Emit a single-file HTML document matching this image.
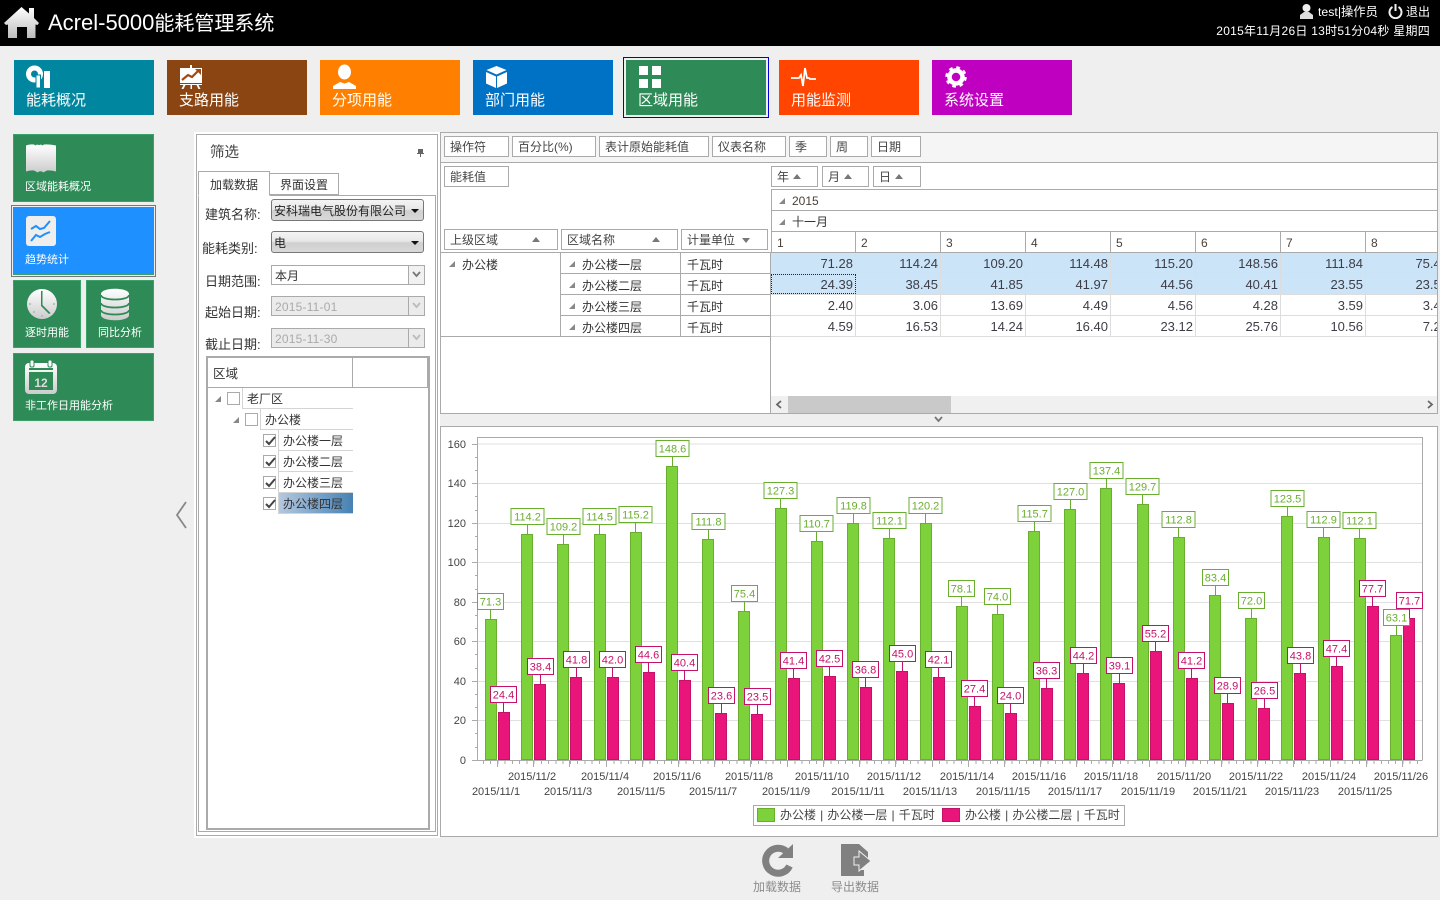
<!DOCTYPE html>
<html lang="zh"><head><meta charset="utf-8"><title>Acrel-5000能耗管理系统</title>
<style>
*{box-sizing:border-box}
html,body{margin:0;padding:0}
body{width:1440px;height:900px;overflow:hidden;background:#efefef;position:relative;font:12px "Liberation Sans","WenQuanYi Zen Hei","Noto Sans CJK SC",sans-serif;color:#444}
.a,.t,.s,.f,.l,.tri,.up,.dn{position:absolute}
.a{white-space:nowrap}
.t{top:60px;width:140px;height:55px;color:#fff;font-size:15px}
.t span{position:absolute;left:12px;top:32px;line-height:17px}
.t svg{position:absolute;left:0;top:0}
.s{background:#2e8b57;border:1px solid #3aa268;color:#fff;font-size:11px}
.s span{position:absolute;left:11px;line-height:14px;white-space:nowrap}
.s svg{position:absolute;left:0;top:0}
.l{font-size:13px;color:#333;white-space:nowrap;line-height:16px}
.f{background:#fff;border:1px solid #aaa;height:21px;line-height:21px;padding-left:5px;color:#444;white-space:nowrap}
.cb{position:absolute;left:271px;width:153px;height:22px;border:1px solid #777;border-radius:3px;background:linear-gradient(#f4f4f4,#e8e8e8 45%,#cfcfcf 55%,#d8d8d8);padding-left:2px;line-height:23px;color:#222;white-space:nowrap;overflow:hidden}
.cb i{position:absolute;right:4px;top:9px;border-left:4px solid transparent;border-right:4px solid transparent;border-top:4px solid #111}
.ip{position:absolute;left:271px;width:154px;height:20px;border:1px solid #aaa;background:#fff;line-height:20px;padding-left:3px;color:#333}
.ip.d{background:#ebebeb;color:#aaa;letter-spacing:.2px}
.ip b{position:absolute;right:0;top:0;width:16px;height:18px;border-left:1px solid #aaa;background:#f1f1f1}
.ip.d b{background:#ebebeb}
.ip svg{position:absolute;left:3px;top:5px}
.ck{position:absolute;width:13px;height:13px;border:1px solid #aaa;background:#fff}
.ck svg{position:absolute;left:1px;top:1px}
.tc{position:absolute;right:auto;height:21px;border-left:1px solid #d4d4d4;border-bottom:1px solid #d4d4d4;background:#fff;line-height:22px;padding-left:4px;color:#333;white-space:nowrap}
.tri{width:0;height:0;border-left:6px solid transparent;border-bottom:6px solid #888}
.up{width:0;height:0;border-left:4.5px solid transparent;border-right:4.5px solid transparent;border-bottom:5px solid #777}
.dn{width:0;height:0;border-left:4.5px solid transparent;border-right:4.5px solid transparent;border-top:5px solid #777}
.rw{display:flex;height:21px}
.rw div{width:85px;flex:none;border-right:1px solid #ddd;border-bottom:1px solid #ddd;text-align:right;padding-right:2px;font-size:13px;line-height:22px;color:#3d3d48}
.rw.b div{background:#cce4f7}
.dh{display:flex;height:21px}
.dh div{width:85px;flex:none;border-right:1px solid #aaa;border-bottom:1px solid #aaa;padding-left:5px;font-size:12px;line-height:22px;color:#4a4038}
.lc{position:absolute;height:21px;line-height:24px;color:#333;white-space:nowrap}
svg text{font-family:"Liberation Sans","WenQuanYi Zen Hei",sans-serif}
</style></head><body>
<!-- header -->
<div class="a" style="left:0;top:0;width:1440px;height:46px;background:#000"></div>
<svg class="a" style="left:0;top:0" width="46" height="46"><defs><linearGradient id="wg" x1="0" y1="0" x2="0" y2="1"><stop offset="0" stop-color="#fff"/><stop offset="1" stop-color="#bdbdbd"/></linearGradient></defs><path fill="url(#wg)" d="M21.500 7 L29 13.500V8h5v10l5 5-1.500 2-2-.5V38H27V27h-10v11H8V24.500l-2 .5-2-2z"/></svg>
<div class="a" style="left:48px;top:9px;font-size:20px;line-height:28px;color:#fff"><span style="font-size:22px">Acrel-5000</span>能耗管理系统</div>
<svg class="a" style="left:1299px;top:3px" width="16" height="17"><circle cx="7.500" cy="5" r="4" fill="#eee"/><path fill="#ddd" d="M1 16v-4l4-3h5l4 3v4z"/></svg>
<div class="a" style="left:1318px;top:4px;line-height:16px;color:#fff;font-size:12.300px">test|操作员</div>
<svg class="a" style="left:1388px;top:4px" width="15" height="15"><path fill="none" stroke="#eee" stroke-width="2" d="M4.500 3A6 6 0 1 0 10.500 3M7.500 0v7"/></svg>
<div class="a" style="left:1406px;top:4px;line-height:16px;color:#fff">退出</div>
<div class="a" style="right:10px;top:23px;line-height:16px;color:#fff;letter-spacing:.26px">2015年11月26日 13时51分04秒 星期四</div>

<!-- top tiles -->
<div class="t" style="left:14px;background:#00869e"><svg width="50" height="32" fill="#fff"><circle cx="20.500" cy="14" r="6" fill="none" stroke="#fff" stroke-width="5"/><path d="M21 14l9 6v-9z" fill="#00869e" style="display:none"/><rect x="22" y="15" width="4.500" height="13" stroke="#00869e" stroke-width="1"/><rect x="30" y="11" width="6" height="17"/></svg><span>能耗概况</span></div>
<div class="t" style="left:167px;background:#8b4513"><svg width="50" height="32"><path fill="#fff" d="M13 8h22v15H13zM23 5h2v3h-2zM13 24h22v1H13zM16.500 25h2l-2 4h-2zM23.500 25h1.500v4h-1.500zM29.500 25h2l2 4h-2z"/><path d="M15 20l6-5 4 2 6-6" fill="none" stroke="#a04a10" stroke-width="2.200"/><path d="M28 9h6v6z" fill="#a04a10"/></svg><span>支路用能</span></div>
<div class="t" style="left:320px;background:#ff8000"><svg width="50" height="32" fill="#fff"><ellipse cx="24.500" cy="12" rx="6.500" ry="7.500"/><path d="M13 29v-3l7-4 4.500 1.500L29 22l7 4v3z"/></svg><span>分项用能</span></div>
<div class="t" style="left:473px;background:#0072c6"><svg width="50" height="32" fill="#fff"><path d="M23.500 6l10 4-10 4.500-10-4.500z"/><path d="M13 12l10 4.500V28l-10-4.500zM24 16.500l10-4.500v11.500L24 28z"/></svg><span>部门用能</span></div>
<div class="a" style="left:623px;top:57px;width:146px;height:61px;border:1px solid #0000e0"></div>
<div class="t" style="left:626px;background:#2e8b57"><svg width="50" height="32" fill="#fff"><rect x="13" y="6" width="9" height="9"/><rect x="26" y="6" width="9" height="9"/><rect x="13" y="19" width="9" height="9"/><rect x="26" y="19" width="9" height="9"/></svg><span>区域用能</span></div>
<div class="t" style="left:779px;background:#ff4500"><svg width="50" height="32"><path d="M12 18h8l2-3 2 11 2-18 2 10h2l1 1h6" fill="none" stroke="#fff" stroke-width="1.800"/></svg><span>用能监测</span></div>
<div class="t" style="left:932px;background:#c000c0"><svg width="50" height="32"><circle cx="24" cy="17" r="6.500" fill="none" stroke="#fff" stroke-width="4.500"/><circle cx="24" cy="17" r="9" fill="none" stroke="#fff" stroke-width="3.500" stroke-dasharray="3.500 3.570"/></svg><span>系统设置</span></div>

<!-- side tiles -->
<div class="s" style="left:13px;top:134px;width:141px;height:68px"><svg width="60" height="45"><defs><linearGradient id="mg" x1="0" y1="0" x2="0" y2="1"><stop offset="0" stop-color="#fff"/><stop offset="1" stop-color="#ccc"/></linearGradient></defs><path fill="url(#mg)" d="M12 10.500q4-1.500 8-1 l1.500 1 1.500-1q2 1 4 0l1.500 1 1.500-1q4-.5 12 1V36.500q-6-1.500-9-1l-2 1-1.500 1-1.500-1q-1.500-.5-3 0l-1.500 1-1.500-1-2-1q-3-.5-8 1z"/></svg><span style="top:45px">区域能耗概况</span></div>
<div class="a" style="left:11px;top:205px;width:145px;height:72px;border:1px solid #777"></div>
<div class="s" style="left:13px;top:207px;width:141px;height:68px;background:#1e90ff"><svg width="60" height="45"><rect x="12" y="8" width="30" height="30" rx="3" fill="#eee"/><path d="M17 21l5-3 4 3 4-1 6-7M17 33l5-6 4 2 5-3 5-2" fill="none" stroke="#1e90ff" stroke-width="2"/></svg><span style="top:45px">趋势统计</span></div>
<div class="s" style="left:13px;top:280px;width:68px;height:68px"><svg width="60" height="45"><circle cx="28" cy="23" r="15" fill="url(#mg)"/><path d="M27 10h1.500v14l8 8-1.500 1-8-8z" fill="#2e8b57"/><g fill="#9bbfa8"><circle cx="16" cy="23" r="1"/><circle cx="40" cy="23" r="1"/><circle cx="28" cy="35" r="1"/><circle cx="20" cy="31" r="1"/></g></svg><span style="top:45px">逐时用能</span></div>
<div class="s" style="left:86px;top:280px;width:68px;height:68px"><svg width="60" height="45"><path fill="url(#mg)" d="M14 13c0-7 28-7 28 0v21c0 7-28 7-28 0z"/><path d="M14 14c0 6 28 6 28 0M14 22c0 6 28 6 28 0M14 29c0 6 28 6 28 0" fill="none" stroke="#2e8b57" stroke-width="1.800"/></svg><span style="top:45px">同比分析</span></div>
<div class="s" style="left:13px;top:353px;width:141px;height:68px"><svg width="60" height="45"><rect x="11" y="9" width="32" height="31" rx="4" fill="url(#mg)"/><rect x="16" y="6" width="4" height="7" rx="1.500" fill="#fff" stroke="#2e8b57"/><rect x="34" y="6" width="4" height="7" rx="1.500" fill="#fff" stroke="#2e8b57"/><rect x="15" y="18" width="24" height="18" fill="#2e8b57"/><rect x="15" y="14" width="24" height="2" fill="#2e8b57"/><text x="27" y="33" text-anchor="middle" font-size="12" font-weight="bold" fill="#ddd">12</text></svg><span style="top:45px">非工作日用能分析</span></div>
<svg class="a" style="left:174px;top:500px" width="16" height="30"><path d="M12 2L3 15l9 13" fill="none" stroke="#888" stroke-width="1.800"/></svg>

<!-- filter panel -->
<div class="a" style="left:196px;top:134px;width:242px;height:702px;background:#fff;border:1px solid #aaa;outline:2px solid #fff"></div>
<div class="a" style="left:210px;top:144px;font-size:14.500px;line-height:18px;color:#444">筛选</div>
<svg class="a" style="left:416px;top:148px" width="9" height="10"><path d="M2 1h5v4h1v1H5v3H4V6H1V5h1z" fill="#666"/></svg>
<div class="a" style="left:198px;top:195px;width:238px;height:637px;border:1px solid #aaa;background:#fff"></div>
<div class="f" style="left:269px;top:173px;width:70px;height:22px;line-height:23px;padding-left:10px;color:#333">界面设置</div>
<div class="f" style="left:198px;top:171px;width:72px;height:25px;border-bottom:1px solid #fff;line-height:26px;padding-left:11px;color:#333">加载数据</div>
<div class="l" style="left:205px;top:207px">建筑名称:</div>
<div class="cb" style="top:199px">安科瑞电气股份有限公司<i></i></div>
<div class="l" style="left:202px;top:241px">能耗类别:</div>
<div class="cb" style="top:231px">电<i></i></div>
<div class="l" style="left:205px;top:274px">日期范围:</div>
<div class="ip" style="top:265px">本月<b><svg width="9" height="7"><path d="M1 1l3.500 4L8 1" fill="none" stroke="#777" stroke-width="1.800"/></svg></b></div>
<div class="l" style="left:205px;top:305px">起始日期:</div>
<div class="ip d" style="top:296px">2015-11-01<b><svg width="9" height="7"><path d="M1 1l3.500 4L8 1" fill="none" stroke="#bbb" stroke-width="1.800"/></svg></b></div>
<div class="l" style="left:205px;top:337px">截止日期:</div>
<div class="ip d" style="top:328px">2015-11-30<b><svg width="9" height="7"><path d="M1 1l3.500 4L8 1" fill="none" stroke="#bbb" stroke-width="1.800"/></svg></b></div>
<!-- tree -->
<div class="a" style="left:206px;top:356px;width:224px;height:474px;border:2px solid #aaa;background:#fff"></div>
<div class="a" style="left:208px;top:387px;width:220px;height:1px;background:#aaa"></div>
<div class="a" style="left:352px;top:358px;width:1px;height:29px;background:#aaa"></div>
<div class="a" style="left:427px;top:358px;width:2px;height:29px;background:#aaa"></div>
<div class="a" style="left:213px;top:366px;line-height:16px;color:#333;font-size:12.500px">区域</div>
<div class="tri" style="left:215px;top:396px"></div><div class="ck" style="left:227px;top:392px"></div>
<div class="tc" style="left:242px;top:388px;width:111px">老厂区</div>
<div class="tri" style="left:233px;top:417px"></div><div class="ck" style="left:245px;top:413px"></div>
<div class="tc" style="left:260px;top:409px;width:93px">办公楼</div>
<div class="ck" style="left:263px;top:434px"><svg width="11" height="11"><path d="M1 5l3 3 6-7" fill="none" stroke="#444" stroke-width="2"/></svg></div>
<div class="tc" style="left:278px;top:430px;width:75px">办公楼一层</div>
<div class="ck" style="left:263px;top:455px"><svg width="11" height="11"><path d="M1 5l3 3 6-7" fill="none" stroke="#444" stroke-width="2"/></svg></div>
<div class="tc" style="left:278px;top:451px;width:75px">办公楼二层</div>
<div class="ck" style="left:263px;top:476px"><svg width="11" height="11"><path d="M1 5l3 3 6-7" fill="none" stroke="#444" stroke-width="2"/></svg></div>
<div class="tc" style="left:278px;top:472px;width:75px">办公楼三层</div>
<div class="ck" style="left:263px;top:497px"><svg width="11" height="11"><path d="M1 5l3 3 6-7" fill="none" stroke="#444" stroke-width="2"/></svg></div>
<div class="tc" style="left:278px;top:493px;width:75px;background:linear-gradient(90deg,#b4c8e0,#4682b4)">办公楼四层</div>

<!-- pivot grid -->
<div class="a" style="left:440px;top:132px;width:998px;height:282px;border:1px solid #aaa;background:#fff"></div>
<div class="a" style="left:441px;top:133px;width:996px;height:30px;background:#f5f5f5;border-bottom:1px solid #aaa"></div>
<div class="f" style="left:444px;top:136px;width:65px">操作符</div>
<div class="f" style="left:512px;top:136px;width:84px">百分比(%)</div>
<div class="f" style="left:599px;top:136px;width:110px">表计原始能耗值</div>
<div class="f" style="left:712px;top:136px;width:74px">仪表名称</div>
<div class="f" style="left:789px;top:136px;width:38px">季</div>
<div class="f" style="left:830px;top:136px;width:38px">周</div>
<div class="f" style="left:871px;top:136px;width:50px">日期</div>
<div class="f" style="left:444px;top:166px;width:65px">能耗值</div>
<div class="f" style="left:771px;top:166px;width:47px">年</div><div class="up" style="left:793px;top:174px"></div>
<div class="f" style="left:822px;top:166px;width:47px">月</div><div class="up" style="left:844px;top:174px"></div>
<div class="f" style="left:873px;top:166px;width:48px">日</div><div class="up" style="left:895px;top:174px"></div>
<div class="a" style="left:771px;top:189px;width:666px;height:22px;border:1px solid #aaa;border-right:0;line-height:22px;padding-left:20px;color:#4a4038">2015</div>
<div class="a" style="left:771px;top:211px;width:666px;height:21px;border-left:1px solid #aaa;border-bottom:1px solid #aaa;line-height:23px;padding-left:20px;color:#333">十一月</div>
<div class="tri" style="left:779px;top:198px"></div><div class="tri" style="left:779px;top:219px"></div>
<div class="a" style="left:771px;top:232px;width:666px;height:21px;overflow:hidden;border-left:0"><div class="dh"><div style="border-left:1px solid #aaa">1</div><div>2</div><div>3</div><div>4</div><div>5</div><div>6</div><div>7</div><div>8</div></div></div>
<div class="f" style="left:444px;top:229px;width:114px">上级区域</div><div class="up" style="left:532px;top:237px"></div>
<div class="f" style="left:561px;top:229px;width:117px">区域名称</div><div class="up" style="left:652px;top:237px"></div>
<div class="f" style="left:681px;top:229px;width:87px">计量单位</div><div class="dn" style="left:742px;top:238px"></div>
<!-- row header grid -->
<div class="a" style="left:441px;top:252px;width:329px;height:1px;background:#aaa"></div>
<div class="a" style="left:441px;top:336px;width:330px;height:1px;background:#aaa"></div>
<div class="a" style="left:560px;top:252px;width:1px;height:84px;background:#aaa"></div>
<div class="a" style="left:680px;top:252px;width:1px;height:84px;background:#aaa"></div>
<div class="a" style="left:770px;top:252px;width:1px;height:161px;background:#aaa"></div>
<div class="a" style="left:561px;top:273px;width:209px;height:1px;background:#aaa"></div>
<div class="a" style="left:561px;top:294px;width:209px;height:1px;background:#aaa"></div>
<div class="a" style="left:561px;top:315px;width:209px;height:1px;background:#aaa"></div>
<div class="tri" style="left:449px;top:261px"></div><div class="lc" style="left:462px;top:253px">办公楼</div>
<div class="tri" style="left:569px;top:261px"></div><div class="lc" style="left:582px;top:253px">办公楼一层</div><div class="lc" style="left:687px;top:253px">千瓦时</div>
<div class="tri" style="left:569px;top:282px"></div><div class="lc" style="left:582px;top:274px">办公楼二层</div><div class="lc" style="left:687px;top:274px">千瓦时</div>
<div class="tri" style="left:569px;top:303px"></div><div class="lc" style="left:582px;top:295px">办公楼三层</div><div class="lc" style="left:687px;top:295px">千瓦时</div>
<div class="tri" style="left:569px;top:324px"></div><div class="lc" style="left:582px;top:316px">办公楼四层</div><div class="lc" style="left:687px;top:316px">千瓦时</div>
<div class="a" style="left:771px;top:253px;width:666px;height:84px;overflow:hidden">
<div class="rw b"><div>71.28</div><div>114.24</div><div>109.20</div><div>114.48</div><div>115.20</div><div>148.56</div><div>111.84</div><div>75.42</div></div>
<div class="rw b"><div>24.39</div><div>38.45</div><div>41.85</div><div>41.97</div><div>44.56</div><div>40.41</div><div>23.55</div><div>23.56</div></div>
<div class="rw"><div>2.40</div><div>3.06</div><div>13.69</div><div>4.49</div><div>4.56</div><div>4.28</div><div>3.59</div><div>3.41</div></div>
<div class="rw"><div>4.59</div><div>16.53</div><div>14.24</div><div>16.40</div><div>23.12</div><div>25.76</div><div>10.56</div><div>7.23</div></div>
</div>
<div class="a" style="left:771px;top:274px;width:85px;height:20px;border:1px dotted #223"></div>
<div class="a" style="left:771px;top:396px;width:666px;height:17px;background:#f0f0f0"></div>
<div class="a" style="left:788px;top:396px;width:163px;height:17px;background:#c9c9c9"></div>
<svg class="a" style="left:775px;top:400px" width="9" height="9"><path d="M6 1L2 4.500 6 8" fill="none" stroke="#666" stroke-width="1.800"/></svg>
<svg class="a" style="left:1425px;top:400px" width="9" height="9"><path d="M3 1l4 3.500L3 8" fill="none" stroke="#666" stroke-width="1.800"/></svg>
<svg class="a" style="left:934px;top:416px" width="9" height="8"><path d="M1 1l3.500 4L8 1" fill="none" stroke="#777" stroke-width="1.800"/></svg>

<!-- chart -->
<svg class="a" style="left:0;top:0" width="1440" height="900" font-size="11">
<defs>
<path id="w5" d="M0-10V0M-16.500-26h33v16h-33z"/>
<path id="w4" d="M0-10V0M-13-26h26v16h-26z"/>
</defs>
<style>
.cs{shape-rendering:crispEdges}
.gb rect{fill:#7dd13a;stroke:#6aae30}
.pb rect{fill:#ea157a;stroke:#c4126a}
.gl use{fill:#fff;stroke:#6aae30}
.gl text{fill:#6aae30;text-anchor:middle}
.pl use{fill:#fff;stroke:#c4126a}
.pl text{fill:#c4126a;text-anchor:middle}
.yl text{fill:#444;text-anchor:end}
.xl text{fill:#444;text-anchor:middle}
</style>
<g class="cs">
<rect x="440.500" y="426.500" width="997" height="410" fill="#fff" stroke="#aaa"/>
<path stroke="#e0e0e0" d="M477 444H1422M477 483.500H1422M477 523.500H1422M477 562.500H1422M477 602.500H1422M477 641.500H1422M477 681.500H1422M477 720.500H1422" fill="none"/>
<path stroke="#aaa" fill="none" d="M477.500 760V437.500H1422.500V760M472 760.500H1422.500"/>
<path stroke="#aaa" fill="none" d="M472 444.500h5M472 483.500h5M472 523.500h5M472 562.500h5M472 602.500h5M472 641.500h5M472 681.500h5M472 720.500h5M475 457.500h2M475 470.500h2M475 496.500h2M475 510.500h2M475 536.500h2M475 549.500h2M475 575.500h2M475 589.500h2M475 615.500h2M475 628.500h2M475 654.500h2M475 668.500h2M475 694.500h2M475 707.500h2M475 733.500h2M475 747.500h2"/>
<line x1="483" x2="1422" y1="762.500" y2="762.500" stroke="#aaa" stroke-width="3" stroke-dasharray="1 6.240"/>
<path stroke="#aaa" fill="none" d="M497.500 760v7M533.500 760v7M569.500 760v7M606.500 760v7M642.500 760v7M678.500 760v7M714.500 760v7M750.500 760v7M787.500 760v7M823.500 760v7M859.500 760v7M895.500 760v7M932.500 760v7M968.500 760v7M1004.500 760v7M1040.500 760v7M1076.500 760v7M1112.500 760v7M1149.500 760v7M1185.500 760v7M1221.500 760v7M1257.500 760v7M1293.500 760v7M1330.500 760v7M1366.500 760v7M1402.500 760v7"/>
<g class="gb">
<rect x="485.500" y="619.500" width="11" height="140"/><rect x="521.500" y="534.500" width="11" height="225"/><rect x="557.500" y="544.500" width="11" height="215"/><rect x="594.500" y="534.500" width="11" height="225"/><rect x="630.500" y="532.500" width="11" height="227"/><rect x="666.500" y="466.500" width="11" height="293"/><rect x="702.500" y="539.500" width="11" height="220"/><rect x="738.500" y="611.500" width="11" height="148"/><rect x="775.500" y="508.500" width="11" height="251"/><rect x="811.500" y="541.500" width="11" height="218"/><rect x="847.500" y="523.500" width="11" height="236"/><rect x="883.500" y="538.500" width="11" height="221"/><rect x="920.500" y="523.500" width="11" height="236"/><rect x="956.500" y="606.500" width="11" height="153"/><rect x="992.500" y="614.500" width="11" height="145"/><rect x="1028.500" y="531.500" width="11" height="228"/><rect x="1064.500" y="509.500" width="11" height="250"/><rect x="1100.500" y="488.500" width="11" height="271"/><rect x="1137.500" y="504.500" width="11" height="255"/><rect x="1173.500" y="537.500" width="11" height="222"/><rect x="1209.500" y="595.500" width="11" height="164"/><rect x="1245.500" y="618.500" width="11" height="141"/><rect x="1281.500" y="516.500" width="11" height="243"/><rect x="1318.500" y="537.500" width="11" height="222"/><rect x="1354.500" y="538.500" width="11" height="221"/><rect x="1390.500" y="635.500" width="11" height="124"/>
</g>
<g class="pb">
<rect x="498.500" y="712.500" width="11" height="47"/><rect x="534.500" y="684.500" width="11" height="75"/><rect x="570.500" y="677.500" width="11" height="82"/><rect x="607.500" y="677.500" width="11" height="82"/><rect x="643.500" y="672.500" width="11" height="87"/><rect x="679.500" y="680.500" width="11" height="79"/><rect x="715.500" y="713.500" width="11" height="46"/><rect x="751.500" y="714.500" width="11" height="45"/><rect x="788.500" y="678.500" width="11" height="81"/><rect x="824.500" y="676.500" width="11" height="83"/><rect x="860.500" y="687.500" width="11" height="72"/><rect x="896.500" y="671.500" width="11" height="88"/><rect x="933.500" y="677.500" width="11" height="82"/><rect x="969.500" y="706.500" width="11" height="53"/><rect x="1005.500" y="713.500" width="11" height="46"/><rect x="1041.500" y="688.500" width="11" height="71"/><rect x="1077.500" y="673.500" width="11" height="86"/><rect x="1113.500" y="683.500" width="11" height="76"/><rect x="1150.500" y="651.500" width="11" height="108"/><rect x="1186.500" y="678.500" width="11" height="81"/><rect x="1222.500" y="703.500" width="11" height="56"/><rect x="1258.500" y="708.500" width="11" height="51"/><rect x="1294.500" y="673.500" width="11" height="86"/><rect x="1331.500" y="666.500" width="11" height="93"/><rect x="1367.500" y="606.500" width="11" height="153"/><rect x="1403.500" y="618.500" width="11" height="141"/>
</g>
</g>
<g class="yl">
<text x="466" y="448">160</text><text x="466" y="487">140</text><text x="466" y="527">120</text><text x="466" y="566">100</text><text x="466" y="606">80</text><text x="466" y="645">60</text><text x="466" y="685">40</text><text x="466" y="724">20</text><text x="466" y="764">0</text>
</g>
<g class="xl">
<text x="532" y="780">2015/11/2</text><text x="605" y="780">2015/11/4</text><text x="677" y="780">2015/11/6</text><text x="749" y="780">2015/11/8</text><text x="822" y="780">2015/11/10</text><text x="894" y="780">2015/11/12</text><text x="967" y="780">2015/11/14</text><text x="1039" y="780">2015/11/16</text><text x="1111" y="780">2015/11/18</text><text x="1184" y="780">2015/11/20</text><text x="1256" y="780">2015/11/22</text><text x="1329" y="780">2015/11/24</text><text x="1401" y="780">2015/11/26</text>
<text x="496" y="795">2015/11/1</text><text x="568" y="795">2015/11/3</text><text x="641" y="795">2015/11/5</text><text x="713" y="795">2015/11/7</text><text x="786" y="795">2015/11/9</text><text x="858" y="795">2015/11/11</text><text x="930" y="795">2015/11/13</text><text x="1003" y="795">2015/11/15</text><text x="1075" y="795">2015/11/17</text><text x="1148" y="795">2015/11/19</text><text x="1220" y="795">2015/11/21</text><text x="1292" y="795">2015/11/23</text><text x="1365" y="795">2015/11/25</text>
</g>
<g class="gl cs-lab">
<g transform="translate(490.500,619.500)"><use href="#w4" class="cs"/><text y="-14">71.3</text></g>
<g transform="translate(527.500,534.500)"><use href="#w5" class="cs"/><text y="-14">114.2</text></g>
<g transform="translate(563.500,544.500)"><use href="#w5" class="cs"/><text y="-14">109.2</text></g>
<g transform="translate(599.500,534.500)"><use href="#w5" class="cs"/><text y="-14">114.5</text></g>
<g transform="translate(635.500,532.500)"><use href="#w5" class="cs"/><text y="-14">115.2</text></g>
<g transform="translate(672.500,466.500)"><use href="#w5" class="cs"/><text y="-14">148.6</text></g>
<g transform="translate(708.500,539.500)"><use href="#w5" class="cs"/><text y="-14">111.8</text></g>
<g transform="translate(744.500,611.500)"><use href="#w4" class="cs"/><text y="-14">75.4</text></g>
<g transform="translate(780.500,508.500)"><use href="#w5" class="cs"/><text y="-14">127.3</text></g>
<g transform="translate(816.500,541.500)"><use href="#w5" class="cs"/><text y="-14">110.7</text></g>
<g transform="translate(853.500,523.500)"><use href="#w5" class="cs"/><text y="-14">119.8</text></g>
<g transform="translate(889.500,538.500)"><use href="#w5" class="cs"/><text y="-14">112.1</text></g>
<g transform="translate(925.500,523.500)"><use href="#w5" class="cs"/><text y="-14">120.2</text></g>
<g transform="translate(961.500,606.500)"><use href="#w4" class="cs"/><text y="-14">78.1</text></g>
<g transform="translate(997.500,614.500)"><use href="#w4" class="cs"/><text y="-14">74.0</text></g>
<g transform="translate(1034.500,531.500)"><use href="#w5" class="cs"/><text y="-14">115.7</text></g>
<g transform="translate(1070.500,509.500)"><use href="#w5" class="cs"/><text y="-14">127.0</text></g>
<g transform="translate(1106.500,488.500)"><use href="#w5" class="cs"/><text y="-14">137.4</text></g>
<g transform="translate(1142.500,504.500)"><use href="#w5" class="cs"/><text y="-14">129.7</text></g>
<g transform="translate(1178.500,537.500)"><use href="#w5" class="cs"/><text y="-14">112.8</text></g>
<g transform="translate(1215.500,595.500)"><use href="#w4" class="cs"/><text y="-14">83.4</text></g>
<g transform="translate(1251.500,618.500)"><use href="#w4" class="cs"/><text y="-14">72.0</text></g>
<g transform="translate(1287.500,516.500)"><use href="#w5" class="cs"/><text y="-14">123.5</text></g>
<g transform="translate(1323.500,537.500)"><use href="#w5" class="cs"/><text y="-14">112.9</text></g>
<g transform="translate(1359.500,538.500)"><use href="#w5" class="cs"/><text y="-14">112.1</text></g>
<g transform="translate(1396.500,635.500)"><use href="#w4" class="cs"/><text y="-14">63.1</text></g>
</g>
<g class="pl">
<g transform="translate(503.500,712.500)"><use href="#w4" class="cs"/><text y="-14">24.4</text></g>
<g transform="translate(540.500,684.500)"><use href="#w4" class="cs"/><text y="-14">38.4</text></g>
<g transform="translate(576.500,677.500)"><use href="#w4" class="cs"/><text y="-14">41.8</text></g>
<g transform="translate(612.500,677.500)"><use href="#w4" class="cs"/><text y="-14">42.0</text></g>
<g transform="translate(648.500,672.500)"><use href="#w4" class="cs"/><text y="-14">44.6</text></g>
<g transform="translate(684.500,680.500)"><use href="#w4" class="cs"/><text y="-14">40.4</text></g>
<g transform="translate(721.500,713.500)"><use href="#w4" class="cs"/><text y="-14">23.6</text></g>
<g transform="translate(757.500,714.500)"><use href="#w4" class="cs"/><text y="-14">23.5</text></g>
<g transform="translate(793.500,678.500)"><use href="#w4" class="cs"/><text y="-14">41.4</text></g>
<g transform="translate(829.500,676.500)"><use href="#w4" class="cs"/><text y="-14">42.5</text></g>
<g transform="translate(865.500,687.500)"><use href="#w4" class="cs"/><text y="-14">36.8</text></g>
<g transform="translate(902.500,671.500)"><use href="#w4" class="cs"/><text y="-14">45.0</text></g>
<g transform="translate(938.500,677.500)"><use href="#w4" class="cs"/><text y="-14">42.1</text></g>
<g transform="translate(974.500,706.500)"><use href="#w4" class="cs"/><text y="-14">27.4</text></g>
<g transform="translate(1010.500,713.500)"><use href="#w4" class="cs"/><text y="-14">24.0</text></g>
<g transform="translate(1046.500,688.500)"><use href="#w4" class="cs"/><text y="-14">36.3</text></g>
<g transform="translate(1083.500,673.500)"><use href="#w4" class="cs"/><text y="-14">44.2</text></g>
<g transform="translate(1119.500,683.500)"><use href="#w4" class="cs"/><text y="-14">39.1</text></g>
<g transform="translate(1155.500,651.500)"><use href="#w4" class="cs"/><text y="-14">55.2</text></g>
<g transform="translate(1191.500,678.500)"><use href="#w4" class="cs"/><text y="-14">41.2</text></g>
<g transform="translate(1227.500,703.500)"><use href="#w4" class="cs"/><text y="-14">28.9</text></g>
<g transform="translate(1264.500,708.500)"><use href="#w4" class="cs"/><text y="-14">26.5</text></g>
<g transform="translate(1300.500,673.500)"><use href="#w4" class="cs"/><text y="-14">43.8</text></g>
<g transform="translate(1336.500,666.500)"><use href="#w4" class="cs"/><text y="-14">47.4</text></g>
<g transform="translate(1372.500,606.500)"><use href="#w4" class="cs"/><text y="-14">77.7</text></g>
<g transform="translate(1409.500,618.500)"><use href="#w4" class="cs"/><text y="-14">71.7</text></g>
</g>
<g class="cs">
<rect x="753.500" y="805.500" width="371" height="20" fill="#fff" stroke="#aaa"/>
<rect x="757.500" y="808.500" width="17" height="13" fill="#7dd13a" stroke="#6aae30"/>
<rect x="942.500" y="808.500" width="17" height="13" fill="#ea157a" stroke="#c4126a"/>
</g>
<text x="780" y="819" font-size="12" fill="#444" word-spacing=".8">办公楼 | 办公楼一层 | 千瓦时</text>
<text x="965" y="819" font-size="12" fill="#444" word-spacing=".8">办公楼 | 办公楼二层 | 千瓦时</text>
<!-- bottom buttons -->
<path d="M789.500 866A12.500 12.500 0 1 1 786 851" fill="none" stroke="#808080" stroke-width="7"/>
<path d="M793 844V858H778z" fill="#808080"/>
<path d="M841 844h18l9 8v6h-7a8 8 0 0 0 0 12h3v6h-23z" fill="#808080"/>
<path d="M854 857h5v-6l12 10-12 10v-6h-5z" fill="#808080" stroke="#efefef" stroke-width="1"/>
</svg>
<div class="a" style="left:753px;top:879px;line-height:16px;color:#8c8c8c">加载数据</div>
<div class="a" style="left:831px;top:879px;line-height:16px;color:#8c8c8c">导出数据</div>
</body></html>
